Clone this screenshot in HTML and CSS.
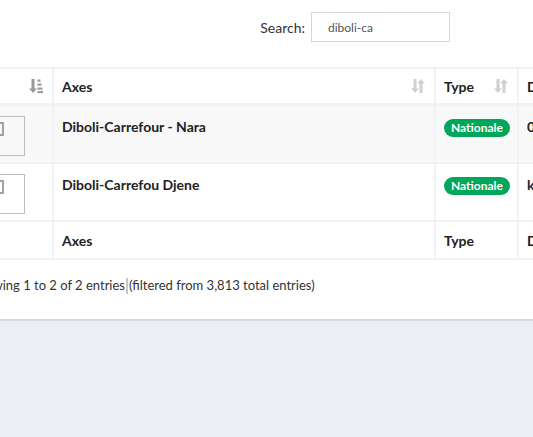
FILE: index.html
```html
<!DOCTYPE html>
<html>
<head>
<meta charset="utf-8">
<link rel="stylesheet" href="styles.css">
</head>
<body>
<div class="card">
  <div class="search-row">
    <label class="search-label">Search:</label>
    <div class="search-input">diboli-ca</div>
  </div>
  <div class="scroller">
    <table class="grid">
      <colgroup>
        <col class="c1"><col class="c2"><col class="c3"><col class="c4">
      </colgroup>
      <thead>
        <tr>
          <th><span class="th-in"><span></span>
            <svg class="sort" width="14" height="16" viewBox="0 0 14 16"><path d="M2.5 1h3v9.5h2.5L4 15 0 10.5h2.5z" fill="#9a9a9a"/><rect x="8.5" y="1.5" width="3" height="2.2" fill="#9a9a9a"/><rect x="8.5" y="5.5" width="4" height="2.2" fill="#9a9a9a"/><rect x="8.5" y="9.5" width="5" height="2.2" fill="#9a9a9a"/><rect x="8.5" y="13" width="5.5" height="2.2" fill="#9a9a9a"/></svg></span></th>
          <th><span class="th-in"><span>Axes</span>
            <svg class="sort" width="14" height="16" viewBox="0 0 14 16"><path d="M2.5 1h3v9.5h2.5L4 15 0 10.5h2.5z" fill="#d0d0d0"/><path d="M8.5 15h3V5.5H14L10 1 6 5.5h2.5z" fill="#d0d0d0"/></svg></span></th>
          <th><span class="th-in"><span>Type</span>
            <svg class="sort" width="14" height="16" viewBox="0 0 14 16"><path d="M2.5 1h3v9.5h2.5L4 15 0 10.5h2.5z" fill="#d0d0d0"/><path d="M8.5 15h3V5.5H14L10 1 6 5.5h2.5z" fill="#d0d0d0"/></svg></span></th>
          <th>D</th>
        </tr>
      </thead>
      <tbody>
        <tr class="odd">
          <td><span class="btn-box"><span class="btn-ico"></span></span></td>
          <td class="bold">Diboli-Carrefour - Nara</td>
          <td><span class="badge">Nationale</span></td>
          <td class="bold">0</td>
        </tr>
        <tr>
          <td><span class="btn-box"><span class="btn-ico"></span></span></td>
          <td class="bold">Diboli-Carrefou Djene</td>
          <td><span class="badge">Nationale</span></td>
          <td class="bold">k</td>
        </tr>
      </tbody>
      <tfoot>
        <tr>
          <th></th>
          <th>Axes</th>
          <th>Type</th>
          <th>D</th>
        </tr>
      </tfoot>
    </table>
    <div class="info">Showing 1 to 2 of 2 entries<span class="caret"></span>(filtered from 3,813 total entries)</div>
  </div>
</div>
</body>
</html>
```

FILE: styles.css
```css
html, body {
  margin: 0;
  padding: 0;
}
body {
  background: #ebeef3;
  font-family: "Lato", "Liberation Sans", sans-serif;
  color: #333;
  height: 437px;
  overflow: hidden;
}
.card {
  background: #fff;
  border-bottom: 2px solid #d6d9de;
  height: 319px;
  overflow: hidden;
}
.search-row {
  display: flex;
  justify-content: flex-end;
  align-items: center;
  padding: 12px 83px 0 0;
  height: 30px;
}
.search-label {
  font-size: 14px;
  color: #333;
  margin-right: 6px;
  padding-top: 1px;
}
.search-input {
  box-sizing: border-box;
  width: 139px;
  height: 30px;
  border: 1px solid #d2d6de;
  font-size: 12px;
  color: #555;
  padding: 7px 10px 0 16px;
}
.scroller {
  margin-left: -28px;
  margin-top: 25px;
}
.grid {
  border-collapse: collapse;
  table-layout: fixed;
  width: 600px;
  font-size: 14px;
}
.c1 { width: 80px; }
.c2 { width: 382px; }
.c3 { width: 83px; }
.c4 { width: 55px; }
.grid th, .grid td {
  border: 2px solid #f2f2f2;
  text-align: left;
  vertical-align: top;
  padding: 0 8px;
  font-weight: 700;
  color: #222;
}
.grid thead th {
  height: 34px;
  vertical-align: middle;
  border-bottom-width: 3px;
}
.grid tfoot th {
  height: 36px;
  vertical-align: middle;
  border-top-width: 2px;
}
.grid tbody td {
  height: 44px;
  padding-top: 12px;
}
.grid tbody tr.odd td {
  background: #f8f8f8;
}
.th-in {
  display: flex;
  justify-content: space-between;
  align-items: center;
}
.sort {
  display: block;
  margin-right: 1px;
}
.btn-box {
  display: block;
  box-sizing: border-box;
  width: 43px;
  height: 40px;
  margin: -2px 0 0 0;
  border: 1px solid #bdbdbd;
  position: relative;
}
.btn-ico {
  position: absolute;
  left: 14px;
  top: 5px;
  width: 5px;
  height: 10px;
  border: 2px solid #9aa4ad;
  border-left: none;
}
.badge {
  display: inline-block;
  background: #00a65a;
  color: #fff;
  font-size: 12px;
  font-weight: 700;
  border-radius: 9px;
  padding: 1px 7px 2px;
  line-height: 15px;
  margin-top: 1px;
}
.info {
  font-size: 13px;
  color: #333;
  padding-top: 17px;
  margin-left: -1px;
}
.caret {
  display: inline-block;
  width: 2px;
  height: 16px;
  background: #c8c8c8;
  vertical-align: -4px;
  margin: 0 1px;
}
```
